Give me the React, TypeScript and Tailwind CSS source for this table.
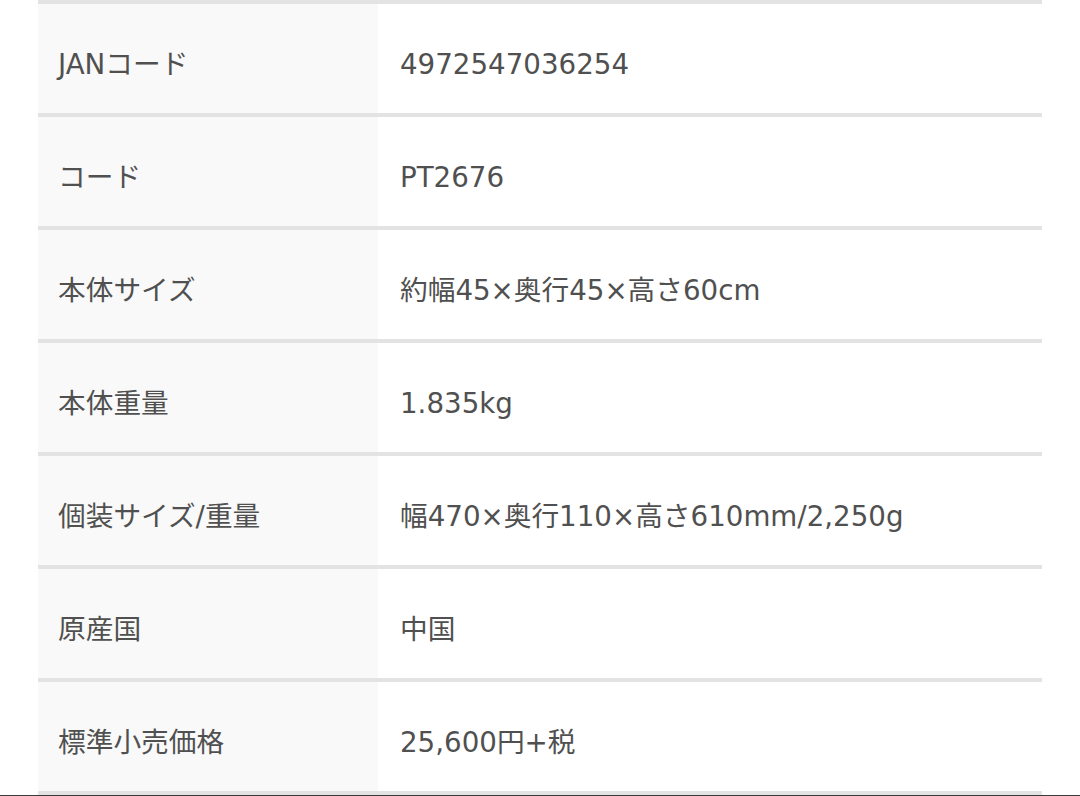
const ROWS: [string, string][] = [
  ["JANコード", "4972547036254"],
  ["コード", "PT2676"],
  ["本体サイズ", "約幅45×奥行45×高さ60cm"],
  ["本体重量", "1.835kg"],
  ["個装サイズ/重量", "幅470×奥行110×高さ610mm/2,250g"],
  ["原産国", "中国"],
  ["標準小売価格", "25,600円+税"],
];

export default function App() {
  return (
    <div className="flex h-[796px] w-[1080px] flex-col overflow-hidden bg-white font-['DejaVu_Sans','Noto_Sans_CJK_JP',sans-serif] text-[27.7px] text-[#505050]">
      <div className="mx-[38px] flex flex-col border-t-4 border-[#e3e3e3]">
        {ROWS.map(([label, value]) => (
          <div key={label} className="flex h-[113px] shrink-0 border-b-4 border-[#e3e3e3]">
            <div className="flex w-[340px] items-center bg-[#f9f9f9] pl-5 pt-3">{label}</div>
            <div className="flex flex-1 items-center pl-[22px] pt-3">{value}</div>
          </div>
        ))}
      </div>
      <div className="mt-auto h-[2px] bg-[#3a3a3a]" />
    </div>
  );
}
